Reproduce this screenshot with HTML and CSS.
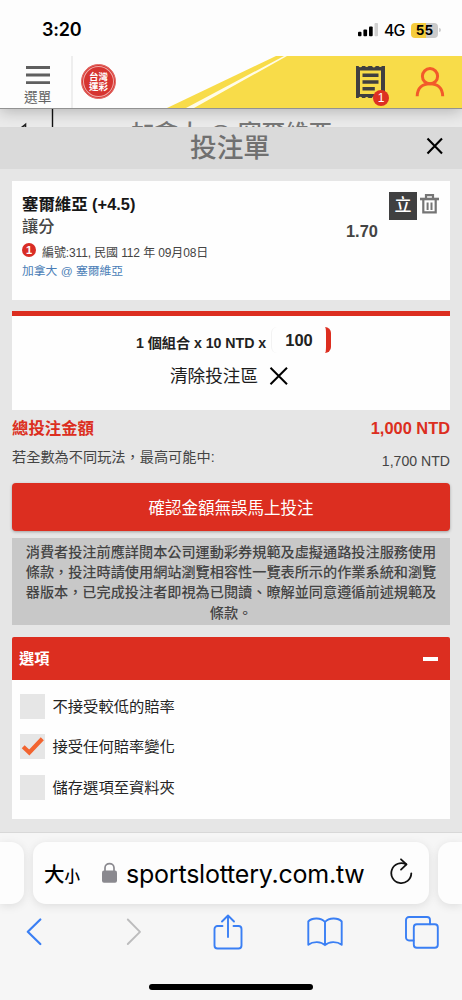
FILE: index.html
```html
<!DOCTYPE html>
<html lang="zh-Hant">
<head>
<meta charset="utf-8">
<title>投注單</title>
<link rel="stylesheet" href="styles.css">
</head>
<body>
<div class="phone">
  <div class="status">
    <span class="time">3:20</span>
    <div class="status-right">
      <svg class="signal" width="20" height="14" viewBox="0 0 20 14"><rect x="0" y="8.7" width="3.5" height="4.6" rx="1"/><rect x="5.4" y="6.4" width="3.7" height="6.9" rx="1"/><rect x="11" y="3.4" width="3.7" height="9.9" rx="1"/><rect x="16.5" y="0" width="3.6" height="13.3" rx="1" fill="#d0d0d0"/></svg>
      <span class="net">4G</span>
      <span class="battery">55</span>
      <span class="battery-cap"></span>
    </div>
  </div>
  <header class="site">
    <div class="menu">
      <svg width="24" height="19" viewBox="0 0 24 19"><path d="M0 1.5h24M0 9h24M0 16.6h24" stroke="#5f5f5f" stroke-width="2.9"/></svg>
      <span class="menu-label">選單</span>
    </div>
    <div class="logo"><span>台灣</span><span>運彩</span></div>
    <div class="banner">
      <svg width="295" height="52" viewBox="0 0 295 52"><path d="M0 52L109 0H295V52Z" fill="#f8dc49"/><path d="M19 52L117 0H120L27 52Z" fill="#fffce8"/></svg>
      <div class="receipt">
        <svg width="29" height="33" viewBox="0 0 29 33"><path d="M0 0H2.5A2 2 0 0 0 6.2 0H9A2 2 0 0 0 12.5 0H16A2 2 0 0 0 19.8 0H22.5A2 2 0 0 0 26 0H29V32H26A2 2 0 0 0 22.5 32H19.8A2 2 0 0 0 16 32H12.5A2 2 0 0 0 9 32H6.2A2 2 0 0 0 2.5 32H0Z" fill="#403f40"/><path d="M4 4.5H25V28H4Z" fill="#f8dc49"/><path d="M6.5 9.2H22.5M6.5 16H22.5M6.5 22.8H18.8" stroke="#403f40" stroke-width="3.4"/></svg>
        <span class="count">1</span>
      </div>
      <svg class="user" width="30" height="30" viewBox="0 0 30 30" fill="none" stroke="#f25a2a" stroke-width="3"><circle cx="15" cy="9.2" r="7.6"/><path d="M2.2 29.2C2.4 21 7.5 16.8 15 16.8S27.5 21 27.7 29.2"/></svg>
    </div>
  </header>
  <div class="behind">
    <svg class="behind-mark" width="60" height="18" viewBox="0 0 60 18"><path d="M52.5 0V18" stroke="#111" stroke-width="1.4"/><path d="M21 19L25.5 15.5V19" fill="none" stroke="#222" stroke-width="1.6"/></svg>
    <span class="behind-text">加拿大 @ 塞爾維亞</span>
  </div>
  <div class="title">
    <h1>投注單</h1>
    <svg class="close" width="18" height="18" viewBox="0 0 18 18"><path d="M1.5 1.5L16 16.5M16 1.5L1.5 16.5" stroke="#000" stroke-width="2.1"/></svg>
  </div>
  <main class="slip">
    <section class="card bet">
      <div class="bet-info">
        <div class="team">塞爾維亞 (+4.5)</div>
        <div class="market">讓分</div>
        <div class="event"><span class="dot">1</span><span class="event-text">編號:311, 民國 112 年 09月08日</span></div>
        <div class="match">加拿大 @ 塞爾維亞</div>
      </div>
      <div class="odds">1.70</div>
      <div class="tools">
        <span class="single">立</span>
        <svg width="19" height="20" viewBox="0 0 19 20" fill="none" stroke="#757575"><path d="M0 5H19" stroke-width="2.6"/><path d="M6 4V1.2H13V4" stroke-width="2.2"/><path d="M3.3 6V18.3H15.7V6" stroke-width="2.2"/><path d="M7.6 8.5V16M11.5 8.5V16" stroke-width="2"/></svg>
      </div>
    </section>
    <section class="card stake">
      <div class="combo"><span>1 個組合 x 10 NTD x</span><span class="amount">100</span></div>
      <div class="clear"><span>清除投注區</span><svg width="20" height="18" viewBox="0 0 20 18"><path d="M1.5 .8L18 17.2M18 .8L1.5 17.2" stroke="#000" stroke-width="2"/></svg></div>
    </section>
    <div class="total"><span class="total-label">總投注金額</span><span class="total-value">1,000 NTD</span></div>
    <div class="payout"><span>若全數為不同玩法，最高可能中:</span><span class="payout-value">1,700 NTD</span></div>
    <button class="confirm">確認金額無誤馬上投注</button>
    <p class="notice">消費者投注前應詳閱本公司運動彩券規範及虛擬通路投注服務使用<br>條款，投注時請使用網站瀏覽相容性一覽表所示的作業系統和瀏覽<br>器版本，已完成投注者即視為已閱讀、暸解並同意遵循前述規範及<br>條款。</p>
    <section class="options">
      <div class="options-head"><span>選項</span><span class="minus"></span></div>
      <div class="options-body">
        <label class="option"><span class="box"></span>不接受較低的賠率</label>
        <label class="option"><span class="box"><svg width="25" height="25" viewBox="0 0 25 25"><path d="M3.2 12.7L9.3 18.5L22.3 4.7" fill="none" stroke="#f26430" stroke-width="4.2"/></svg></span>接受任何賠率變化</label>
        <label class="option"><span class="box"></span>儲存選項至資料夾</label>
      </div>
    </section>
  </main>
  <footer class="browser">
    <div class="tabs">
      <div class="tab side-left"></div>
      <div class="tab address">
        <span class="size-big">大</span><span class="size-small">小</span>
        <svg class="lock" width="15" height="21" viewBox="0 0 15 21"><path d="M3 10V5.8C3 .1 12 .1 12 5.8V10" fill="none" stroke="#8a898f" stroke-width="1.7"/><rect x="0" y="8.5" width="15" height="12.2" rx="2" fill="#8a898f"/></svg>
        <span class="url">sportslottery.com.tw</span>
        <svg class="reload" width="23" height="27" viewBox="0 0 23 27" fill="none" stroke="#111" stroke-width="1.8" stroke-linecap="round" stroke-linejoin="round"><path d="M21.3 15.3A10 10 0 1 1 16.2 6.4"/><path d="M11 1.3L16.5 6.4L11 11.6"/></svg>
      </div>
      <div class="tab side-right"></div>
    </div>
    <nav class="toolbar">
      <span class="tool"><svg width="16" height="28" viewBox="0 0 16 28"><path d="M14.3 1.5L1.8 13.8L14.3 26" stroke-width="2.2"/></svg></span>
      <span class="tool forward"><svg width="16" height="28" viewBox="0 0 16 28"><path d="M1.8 1.5L14 13.8L1.8 26"/></svg></span>
      <span class="tool"><svg width="30" height="36" viewBox="0 0 30 36"><path d="M9.5 12H4.5A3 3 0 0 0 1.5 15V31.5A3 3 0 0 0 4.5 34.5H25.5A3 3 0 0 0 28.5 31.5V15A3 3 0 0 0 25.5 12H20.5M15 23V1.7M9 7.5L15 1.5L21 7.5"/></svg></span>
      <span class="tool"><svg width="36" height="30" viewBox="0 0 36 30"><path d="M18 5C14 .4 5 .4 1.3 4.5V27.8C6 24.2 14 24.2 18 28.2C22 24.2 30 24.2 34.7 27.8V4.5C31 .4 22 .4 18 5V28"/></svg></span>
      <span class="tool"><svg width="34" height="33" viewBox="0 0 34 33"><path d="M8.5 24.5H4A3 3 0 0 1 1 21.5V4A3 3 0 0 1 4 1H22A3 3 0 0 1 25 4V8.3"/><rect x="8.8" y="8.3" width="24" height="23.5" rx="3"/></svg></span>
    </nav>
    <div class="home"></div>
  </footer>
</div>
</body>
</html>
```
FILE: styles.css
```css
* { box-sizing: border-box; }
body { margin: 0; background: #fff; font-family: "Liberation Sans", "Noto Sans CJK TC", sans-serif; }
svg { display: block; flex: none; }
span, h1, button { white-space: nowrap; }
.phone { width: 462px; height: 1000px; overflow: hidden; display: flex; flex-direction: column; background: #e6e6e6; }
.phone > * { flex: none; }

.status { height: 56px; background: #fdfdfd; display: flex; justify-content: space-between; padding: 19px 21px 0 42px; position: relative; z-index: 3; }
.time { font: 600 18px/22px Inter, sans-serif; letter-spacing: -.2px; }
.status-right { display: flex; align-items: center; height: 22px; }
.signal { margin-top: 0; }
.net { font: 500 15.8px/22px Inter, sans-serif; letter-spacing: -.8px; margin-left: 6px; width: 27px; padding-top: 1px; }
.battery { width: 27px; height: 15px; border-radius: 4px; background: linear-gradient(90deg, #f5cc3d 54%, #cacaca 54%); font: 700 13.5px/15px Inter, sans-serif; text-align: center; }
.battery-cap { width: 2px; height: 4px; margin-left: 1px; border-radius: 0 2px 2px 0; background: #ccc; }

.site { height: 53px; background: #fdfdfd; border-bottom: 1px solid #929292; display: flex; position: relative; z-index: 2; box-shadow: 0 2px 15px rgba(0, 0, 0, .25); }
.menu { width: 73px; border-right: 2px solid #eee; display: flex; flex-direction: column; padding: 10px 0 0 24px; gap: 4px; align-items: flex-start; }
.menu-label { font-size: 13.7px; line-height: 18px; color: #626262; }
.menu svg { margin-left: 2px; }
.logo { width: 35px; height: 35px; margin: 8px 0 0 8px; border-radius: 50%; background: #d63430; border: 1px solid #e36a65; box-shadow: inset 0 0 0 1px #d63430, inset 0 0 0 2px #efaaa7; display: flex; flex-direction: column; align-items: center; justify-content: center; font: 700 9.5px/10px "Noto Sans CJK TC", sans-serif; color: #fff; padding-bottom: 1px; }
.banner { margin-left: auto; width: 295px; position: relative; }
.receipt { position: absolute; left: 189px; top: 10px; }
.count { position: absolute; left: 17px; top: 24px; width: 16px; height: 16px; border-radius: 50%; background: #dd3023; color: #fff; font-size: 12px; line-height: 16px; text-align: center; }
.user { position: absolute; left: 248px; top: 11px; }

.behind { height: 18px; overflow: hidden; background: #ebebeb; display: flex; align-items: flex-start; }
.behind-text { margin: 10px 0 0 71px; font-size: 23.7px; line-height: 30px; font-weight: 500; color: #777; letter-spacing: -.2px; }
.title { height: 42px; background: #dadada; display: flex; justify-content: flex-end; align-items: center; padding-right: 18px; }
.title h1 { margin: -4px auto 0 190px; font: 500 26.7px/38px "Noto Sans CJK TC", sans-serif; color: #707070; }
.close { margin-top: -4px; }

.slip { height: 664px; padding: 12px 12px 0; color: #444; border-bottom: 1px solid #d8d8d8; }
.card { background: #fefefe; }
.bet { height: 119px; display: flex; padding: 11px 11px 0 10px; }
.bet-info { width: 316px; }
.team { font-size: 16.4px; line-height: 24px; font-weight: 700; color: #161616; }
.market { font-size: 16.2px; line-height: 20px; font-weight: 500; }
.event { display: flex; align-items: center; height: 24px; gap: 6px; margin-top: 2px; }
.dot { width: 14px; height: 14px; border-radius: 50%; background: #d92d25; color: #fff; font-size: 11px; line-height: 14px; font-weight: 700; text-align: center; margin-top: -1px; }
.event-text { font-size: 12px; line-height: 22px; letter-spacing: -.12px; margin-top: 5px; }
.match { font-size: 11.8px; line-height: 18px; color: #4b7eb7; }
.odds { width: 51px; padding: 29px 0 0 8px; font-size: 16.4px; line-height: 20px; font-weight: 700; }
.tools { display: flex; gap: 3px; align-items: flex-start; }
.single { width: 28px; height: 28px; background: #404041; color: #fff; font-size: 17px; line-height: 28px; font-weight: 500; text-align: center; }
.tools svg { margin-top: 2px; }
.stake { height: 99px; margin-top: 11px; border-top: 5px solid #dc2e20; }
.combo { display: flex; padding: 11px 0 0 124px; font-size: 14.2px; line-height: 30px; font-weight: 700; color: #222; letter-spacing: -.05px; }
.combo span:first-child { width: 135px; padding-top: 1px; }
.amount { width: 60px; height: 26px; border-right: 5px solid #dc2e20; border-left: 1px solid #f2f2f2; border-radius: 6px; font-size: 16.5px; line-height: 26px; text-align: center; }
.clear { display: flex; padding: 3px 0 0 158px; align-items: center; gap: 11px; font-size: 17.6px; line-height: 30px; color: #1d1d1d; }
.total { display: flex; justify-content: space-between; height: 35px; font-size: 16.4px; line-height: 36px; font-weight: 700; color: #dc2e20; }
.payout { display: flex; justify-content: space-between; height: 38px; font-size: 14.2px; line-height: 24px; }
.payout-value { padding-top: 4px; font-size: 14.1px; }
.confirm { display: block; width: 438px; height: 48px; padding: 0; border: 0; border-radius: 4px; background: #dc2e20; color: #fff; font: 16.5px/47px "Noto Sans CJK TC", sans-serif; box-shadow: 0 1px 3px rgba(0, 0, 0, .3); }
.notice { margin: 7px 0 12px; height: 87px; padding: 3px 0; background: #c8c8c8; text-align: center; font: 500 14.17px/20.2px "Noto Sans CJK TC", sans-serif; white-space: nowrap; }
.options-head { height: 43px; border-radius: 2px 2px 0 0; background: #dc2e20; color: #fff; font-size: 15.2px; line-height: 43px; font-weight: 700; padding: 0 12px 0 7px; display: flex; align-items: center; justify-content: space-between; }
.minus { width: 15px; height: 4px; background: #fff; }
.options-body { height: 139px; background: #fefefe; padding: 14px 8px 0; display: flex; flex-direction: column; gap: 15.4px; }
.option { display: flex; gap: 7.5px; height: 25px; align-items: center; font-size: 15.3px; line-height: 25px; color: #242424; }
.box { width: 25px; height: 25px; background: #e6e6e6; }

.browser { height: 167px; background: #f6f6f6; color: #000; }
.tabs { display: flex; justify-content: space-between; padding-top: 9px; height: 74px; }
.tab { height: 62px; background: #fdfdfd; border-radius: 13px; box-shadow: 0 2px 10px rgba(0, 0, 0, .1); }
.side-left { width: 24px; border-radius: 0 13px 13px 0; }
.side-right { width: 24px; border-radius: 13px 0 0 13px; }
.address { width: 396px; display: flex; align-items: center; padding: 0 16px 0 11px; }
.size-big { font: 500 20.5px/30px "Noto Sans CJK TC", sans-serif; }
.size-small { font: 500 15.5px/30px "Noto Sans CJK TC", sans-serif; margin-top: 4px; }
.lock { margin: -1px 0 0 22px; }
.url { font: 400 25px/30px Inter, sans-serif; letter-spacing: -.22px; margin: 2px 0 0 9px; }
.reload { margin: -4px 0 0 auto; }
.toolbar { height: 50px; display: flex; align-items: center; justify-content: space-between; padding: 0 22px 0 16px; fill: none; stroke: #3a7ff4; stroke-width: 1.9; stroke-linecap: round; stroke-linejoin: round; }
.tool { width: 36px; display: flex; justify-content: center; }
.forward { stroke: #bcbcbd; padding-left: 6px; }
.home { width: 164px; height: 6px; margin: 27px 0 0 149px; border-radius: 3px; background: #000; }
```
